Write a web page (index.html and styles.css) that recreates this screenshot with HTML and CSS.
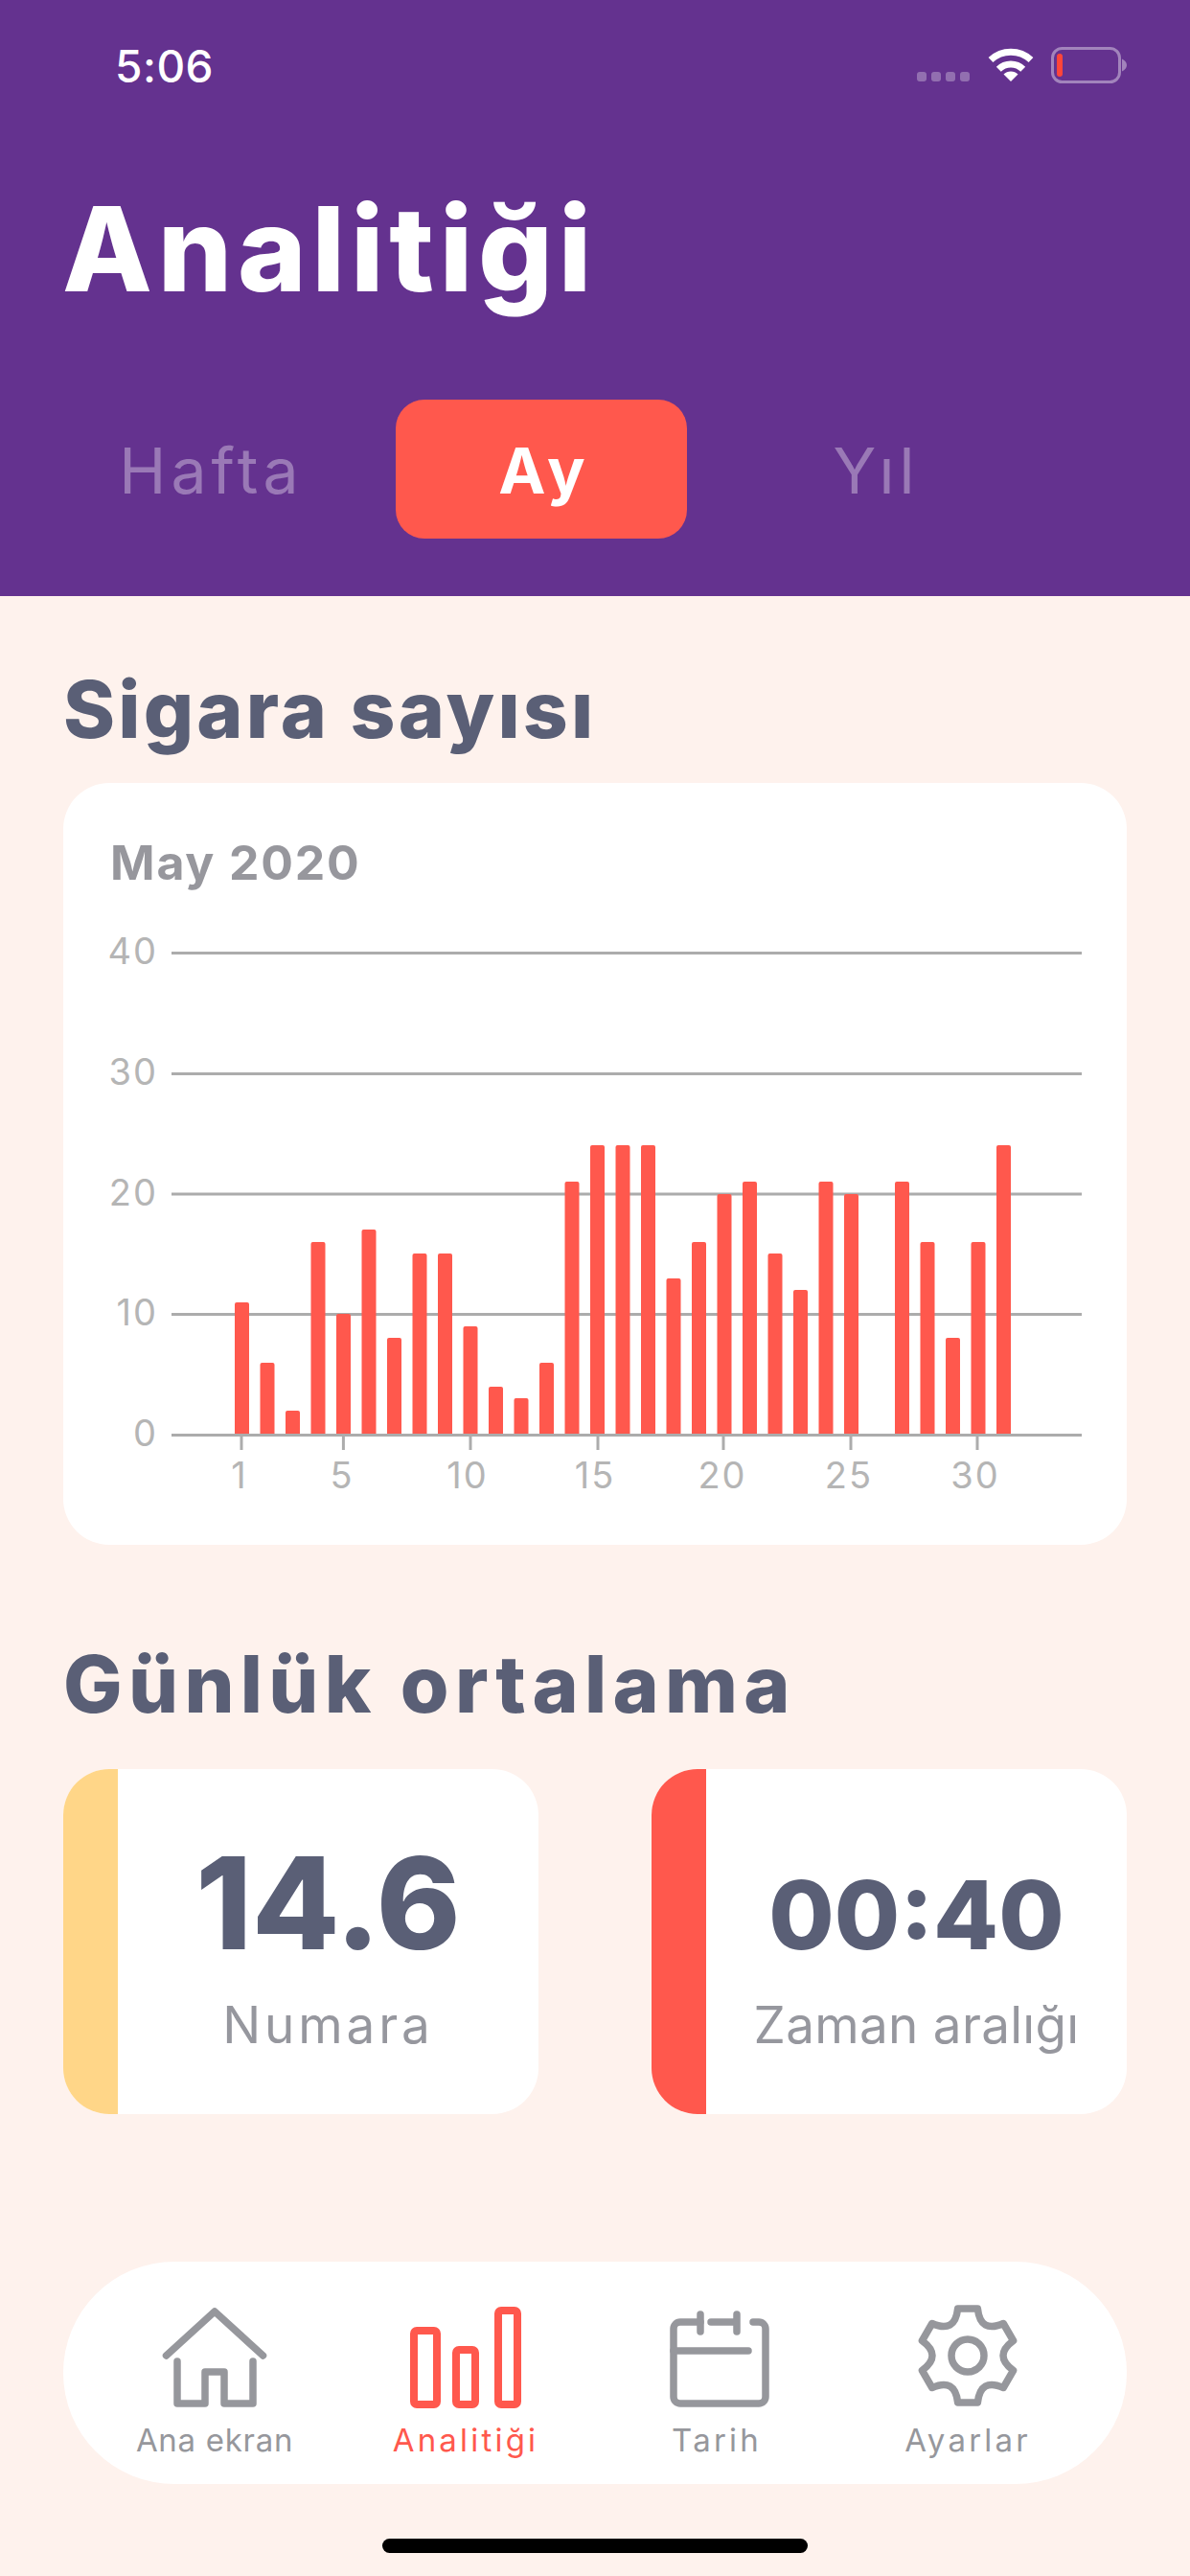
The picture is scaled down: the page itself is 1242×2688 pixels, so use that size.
FILE: index.html
```html
<!DOCTYPE html>
<html lang="tr">
<head>
<meta charset="utf-8">
<title>Analitiği</title>
<link rel="stylesheet" href="styles.css">
</head>
<body>
<div class="phone">
  <header class="header">
    <div class="status">
      <span class="time">5:06</span>
      <div class="status-icons">
        <div class="signal"><i></i><i></i><i></i><i></i></div>
        <svg class="wifi" viewBox="0 0 48 36" width="48" height="36">
          <path class="wifi-arc" d="M3 13.5A30.8 30.8 0 0 1 45 13.5"/>
          <path class="wifi-arc" d="M11.3 23.3A18 18 0 0 1 36.7 23.3"/>
          <path class="wifi-dot" d="M24 36L16.5 28.5A10.6 10.6 0 0 1 31.5 28.5Z"/>
        </svg>
        <svg class="battery" viewBox="0 0 80 38" width="80" height="38">
          <rect class="batt-body" x="1.5" y="1.5" width="70" height="35" rx="10"/>
          <path class="batt-cap" d="M74 12.5C77 14 79 16 79 19S77 24 74 25.5Z"/>
          <rect class="batt-fill" x="6" y="7" width="6" height="24" rx="3"/>
        </svg>
      </div>
    </div>
    <h1 class="title">Analitiği</h1>
    <div class="tabs">
      <div class="tab">Hafta</div>
      <div class="tab tab-active">Ay</div>
      <div class="tab">Yıl</div>
    </div>
  </header>

  <main class="content">
    <h2 class="section-title first">Sigara sayısı</h2>
    <section class="chart-card">
      <div class="chart-title">May 2020</div>
      <svg class="chart" viewBox="0 0 1110 640" width="1110" height="640">
        <line class="grid" x1="113" x2="1063" y1="34.5" y2="34.5"/>
        <line class="grid" x1="113" x2="1063" y1="160.5" y2="160.5"/>
        <line class="grid" x1="113" x2="1063" y1="286" y2="286"/>
        <line class="grid" x1="113" x2="1063" y1="411.5" y2="411.5"/>
        <g class="bars">
          <rect x="179" y="399" width="15" height="140" rx="2"/>
          <rect x="205.5" y="462" width="15" height="77" rx="2"/>
          <rect x="232" y="512" width="15" height="27" rx="2"/>
          <rect x="258.5" y="336" width="15" height="203" rx="2"/>
          <rect x="285" y="411" width="15" height="128" rx="2"/>
          <rect x="311.5" y="323" width="15" height="216" rx="2"/>
          <rect x="338" y="436" width="15" height="103" rx="2"/>
          <rect x="364.5" y="348" width="15" height="191" rx="2"/>
          <rect x="391" y="348" width="15" height="191" rx="2"/>
          <rect x="417.5" y="424" width="15" height="115" rx="2"/>
          <rect x="444" y="487" width="15" height="52" rx="2"/>
          <rect x="470.5" y="499" width="15" height="40" rx="2"/>
          <rect x="497" y="462" width="15" height="77" rx="2"/>
          <rect x="523.5" y="273" width="15" height="266" rx="2"/>
          <rect x="550" y="235" width="15" height="304" rx="2"/>
          <rect x="576.5" y="235" width="15" height="304" rx="2"/>
          <rect x="603" y="235" width="15" height="304" rx="2"/>
          <rect x="629.5" y="374" width="15" height="165" rx="2"/>
          <rect x="656" y="336" width="15" height="203" rx="2"/>
          <rect x="682.5" y="286" width="15" height="253" rx="2"/>
          <rect x="709" y="273" width="15" height="266" rx="2"/>
          <rect x="735.5" y="348" width="15" height="191" rx="2"/>
          <rect x="762" y="386" width="15" height="153" rx="2"/>
          <rect x="788.5" y="273" width="15" height="266" rx="2"/>
          <rect x="815" y="286" width="15" height="253" rx="2"/>
          <rect x="868" y="273" width="15" height="266" rx="2"/>
          <rect x="894.5" y="336" width="15" height="203" rx="2"/>
          <rect x="921" y="436" width="15" height="103" rx="2"/>
          <rect x="947.5" y="336" width="15" height="203" rx="2"/>
          <rect x="974" y="235" width="15" height="304" rx="2"/>
        </g>
        <line class="grid" x1="113" x2="1063" y1="537.5" y2="537.5"/>
        <line class="grid" x1="186" x2="186" y1="537" y2="553"/>
        <line class="grid" x1="292.4" x2="292.4" y1="537" y2="553"/>
        <line class="grid" x1="425" x2="425" y1="537" y2="553"/>
        <line class="grid" x1="558" x2="558" y1="537" y2="553"/>
        <line class="grid" x1="689" x2="689" y1="537" y2="553"/>
        <line class="grid" x1="822" x2="822" y1="537" y2="553"/>
        <line class="grid" x1="954" x2="954" y1="537" y2="553"/>
        <g class="y-labels">
          <text x="99" y="46">40</text>
          <text x="99" y="172">30</text>
          <text x="99" y="298">20</text>
          <text x="99" y="423">10</text>
          <text x="99" y="549">0</text>
        </g>
        <g class="x-labels">
          <text x="184" y="593">1</text>
          <text x="291" y="593">5</text>
          <text x="422" y="593">10</text>
          <text x="555" y="593">15</text>
          <text x="688" y="593">20</text>
          <text x="820" y="593">25</text>
          <text x="952" y="593">30</text>
        </g>
      </svg>
    </section>

    <h2 class="section-title second">Günlük ortalama</h2>
    <section class="stats">
      <div class="stat-card">
        <div class="stripe stripe-yellow"></div>
        <div class="stat-body">
          <div class="stat-value">14.6</div>
          <div class="stat-label stat-label-wide">Numara</div>
        </div>
      </div>
      <div class="stat-card">
        <div class="stripe stripe-red"></div>
        <div class="stat-body">
          <div class="stat-value stat-value-small">00:40</div>
          <div class="stat-label">Zaman aralığı</div>
        </div>
      </div>
    </section>

    <nav class="nav">
      <div class="nav-item">
        <svg class="nav-icon" viewBox="0 0 120 112" width="120" height="112">
          <path d="M9.5 54L60 8L110.5 54"/>
          <path d="M21 60V104H50V71H70V104H100V60"/>
        </svg>
        <span class="nav-label nav-label-tight">Ana ekran</span>
      </div>
      <div class="nav-item nav-item-active">
        <svg class="nav-icon" viewBox="0 0 120 112" width="120" height="112">
          <rect x="6" y="28" width="24" height="77" rx="3"/>
          <rect x="50" y="48" width="20" height="57" rx="3"/>
          <rect x="94" y="7" width="20" height="98" rx="3"/>
        </svg>
        <span class="nav-label">Analitiği</span>
      </div>
      <div class="nav-item">
        <svg class="nav-icon" viewBox="0 0 120 112" width="120" height="112">
          <path d="M43 19H22a7 7 0 0 0-7 7V97a7 7 0 0 0 7 7H104a7 7 0 0 0 7-7V26a7 7 0 0 0-7-7H98"/>
          <path d="M43 11V29M81 11V29M54 19H81M15 49H93"/>
        </svg>
        <span class="nav-label">Tarih</span>
      </div>
      <div class="nav-item">
        <svg class="nav-icon" viewBox="0 0 120 112" width="120" height="112">
          <path d="M49.6 5.1H70.4Q73.2 31.2 97.2 20.5L107.6 38.5Q86.4 54 107.6 69.5L97.2 87.5Q73.2 76.8 70.4 102.9H49.6Q46.8 76.8 22.8 87.5L12.4 69.5Q33.6 54 12.4 38.5L22.8 20.5Q46.8 31.2 49.6 5.1Z"/>
          <circle cx="60" cy="54" r="17"/>
        </svg>
        <span class="nav-label">Ayarlar</span>
      </div>
    </nav>
    <div class="home-bar"></div>
  </main>
</div>
</body>
</html>
```

FILE: styles.css
```css
* { box-sizing: border-box; }
html, body { margin: 0; padding: 0; }
body { background: #fef2ed; font-family: Inter, "Open Sans", sans-serif; }
.phone { width: 1242px; height: 2688px; overflow: hidden; background: #fef2ed; }

.header { height: 622px; background: #64328f; display: flex; flex-direction: column; }
.status { height: 195px; padding: 44px 65px 0 120px; display: flex; justify-content: space-between; align-items: flex-start; }
.time { font-size: 46px; line-height: 50px; font-weight: 500; letter-spacing: .5px; color: #fff; }
.status-icons { display: flex; align-items: flex-start; padding-top: 5px; }
.signal { display: flex; gap: 5px; padding-top: 26px; margin-right: 19px; }
.signal i { width: 10px; height: 10px; border-radius: 3px; background: rgba(255,255,255,.3); }
.wifi { margin-right: 18px; }
.wifi-arc { fill: none; stroke: #fff; stroke-width: 7; }
.wifi-dot { fill: #fff; }
.batt-body { fill: none; stroke: rgba(255,255,255,.4); stroke-width: 3; }
.batt-cap { fill: rgba(255,255,255,.4); }
.batt-fill { fill: #ff453a; }

.title { margin: 0; padding-left: 65px; font-size: 122px; line-height: 130px; font-weight: 800; letter-spacing: 5.8px; color: #fff; }
.tabs { margin-top: 92px; padding-left: 66px; display: grid; grid-template-columns: repeat(3, 304px); column-gap: 43px; }
.tab { height: 145px; padding: 3px 0 0 5px; display: flex; align-items: center; justify-content: center; font-size: 66px; font-weight: 400; letter-spacing: 5px; color: rgba(255,255,255,.35); }
.tab-active { padding-left: 7px; background: #ff584d; border-radius: 30px; color: #fff; font-weight: 700; letter-spacing: 6px; }

.content { padding: 0 66px; }
.section-title { margin: 0; font-size: 82px; line-height: 100px; font-weight: 800; color: #5a5f76; }
.section-title.first { margin-top: 69px; letter-spacing: 3.2px; }
.section-title.second { margin-top: 96px; letter-spacing: 6.3px; }

.chart-card { margin-top: 26px; height: 795px; padding-top: 53px; background: #fff; border-radius: 48px; }
.chart-title { padding-left: 49px; font-size: 50px; line-height: 60px; font-weight: 700; letter-spacing: 1.8px; color: #97979d; }
.chart { display: block; margin-top: 30px; }
.grid { stroke: #acacac; stroke-width: 3; }
.bars rect { fill: #ff584d; }
.y-labels text, .x-labels text { font-family: Inter, sans-serif; font-size: 38px; letter-spacing: 2px; fill: #b5b5b5; }
.y-labels text { text-anchor: end; }
.x-labels text { text-anchor: middle; }

.stats { margin-top: 38px; display: flex; justify-content: space-between; }
.stat-card { width: 496px; height: 360px; display: flex; overflow: hidden; background: #fff; border-radius: 48px; }
.stripe { width: 57px; flex: none; }
.stripe-yellow { background: #ffd688; }
.stripe-red { background: #ff584d; }
.stat-body { flex: 1; padding-top: 70px; display: flex; flex-direction: column; align-items: center; }
.stat-value { height: 140px; font-size: 133px; line-height: 140px; font-weight: 800; letter-spacing: 0; color: #5a5f76; }
.stat-value-small { font-size: 99px; line-height: 164px; }
.stat-label { margin-top: 27px; font-size: 53px; line-height: 60px; letter-spacing: .3px; color: #96979e; white-space: nowrap; }
.stat-label-wide { letter-spacing: 3.9px; }

.nav { margin-top: 154px; height: 232px; padding: 44px 0 0 27px; display: grid; grid-template-columns: repeat(4, 262px); background: #fff; border-radius: 116px; }
.nav-item { display: flex; flex-direction: column; align-items: center; color: #96979c; }
.nav-item-active { color: #ff584d; }
.nav-icon { display: block; fill: none; stroke: currentColor; stroke-width: 7.5; stroke-linecap: round; stroke-linejoin: round; }
.nav-item-active .nav-icon { stroke-width: 8; }
.nav-label { margin-top: 10px; font-size: 33px; line-height: 40px; letter-spacing: 3.2px; white-space: nowrap; }
.nav-label-tight { letter-spacing: .7px; }

.home-bar { width: 444px; height: 15px; margin: 57px auto 0; background: #000; border-radius: 8px; }
```
